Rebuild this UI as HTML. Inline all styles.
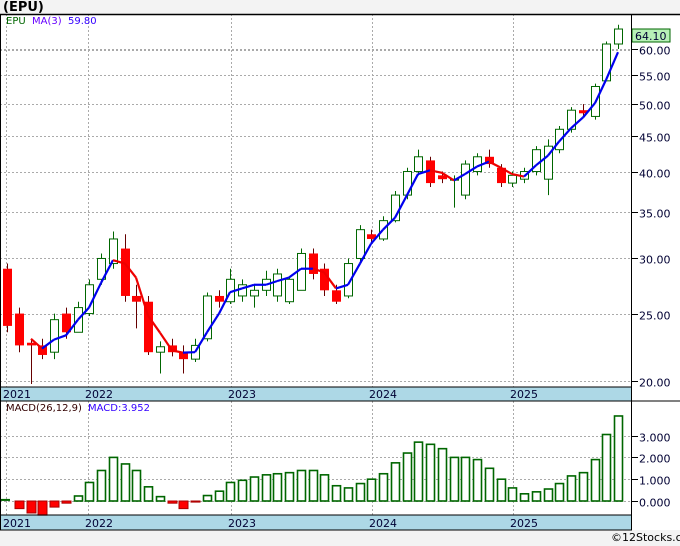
<!DOCTYPE html><html><head><meta charset="utf-8"><style>
body{margin:0;width:680px;height:546px;background:#f3f3f3;position:relative;overflow:hidden;font-family:"DejaVu Sans","Liberation Sans",sans-serif}
.t{position:absolute;font-size:11px;white-space:nowrap;color:#000033}
</style></head><body>
<div class="t" style="left:3px;top:0px;font-weight:bold;font-size:13px;color:#000">(EPU)</div>
<svg id="s" width="680" height="546" style="position:absolute;left:0;top:0"></svg>
<div class="t" style="left:6px;top:16px;font-size:10px;color:#006600">EPU</div>
<div class="t" style="left:32px;top:16px;font-size:10px;color:#6600ff">MA(3)</div>
<div class="t" style="left:68px;top:16px;font-size:10px;color:#3300ff">59.80</div>
<div class="t" style="left:6px;top:403px;font-size:10px;color:#330000">MACD(26,12,9)</div>
<div class="t" style="left:88px;top:403px;font-size:10px;color:#3300ff">MACD:3.952</div>
<div class="t" style="left:611px;top:531px;font-size:11px;color:#000">©12Stocks.com</div>
<script>
var s=document.getElementById('s'),h='';
function L(x1,y1,x2,y2,c,w,d){h+='<line x1="'+x1+'" y1="'+y1+'" x2="'+x2+'" y2="'+y2+'" stroke="'+c+'" stroke-width="'+(w||1)+'"'+(d?' stroke-dasharray="2,2"':'')+'/>';}
function R(x,y,w,hh,f,st,sw){h+='<rect x="'+x+'" y="'+y+'" width="'+w+'" height="'+hh+'" fill="'+f+'"'+(st?' stroke="'+st+'" stroke-width="'+(sw||1)+'"':'')+'/>';}
function T(x,y,t,fs){h+='<text x="'+x+'" y="'+y+'" font-size="'+(fs||11)+'" fill="#000033" font-family="DejaVu Sans,sans-serif">'+t+'</text>';}
R(0,14,680,516,'#fff');
R(0,387,632,14,'#add8e6');R(0,515,632,15,'#add8e6');
function py(p){return 381-302.2*Math.log(p/20);}
var yrs=[[6,'2021'],[88,'2022'],[231,'2023'],[372,'2024'],[513,'2025']];
yrs.forEach(function(a){L(a[0]+.5,14,a[0]+.5,387,'#aaa',1,1);L(a[0]+.5,401,a[0]+.5,515,'#aaa',1,1);T(a[0]-3,398,a[1]);T(a[0]-3,527,a[1]);});
[60,55,50,45,40,35,30,25,20].forEach(function(p){var y=Math.round(py(p))+.5;L(0,y,632,y,'#aaa',1,1);L(632,y,638,y,'#000');T(639,y+5,p.toFixed(2));});
L(0,50.5,632,50.5,'#aaa',1,1);
function my(v){return 501-21.8*v;}
[0,1,2,3].forEach(function(v){var y=Math.round(my(v))+.5;L(0,y,632,y,'#aaa',1,1);L(632,y,638,y,'#000');T(639,y+5,v.toFixed(3));});
var c=[[29,24,29.5,23.5],[25,22.5,25.5,22],[22.7,22.5,23,19.8],[22.5,21.8,23,21.5],[22,24.5,25,21.5],[25,23.5,25.5,23],[23.5,25.5,26,23.5],[25,27.5,28,24.8],[28,30,30.5,27.5],[29.5,32,32.8,29],[31,26.5,32.5,26],[26.5,26,27.5,23.8],[26,22,26.5,21.8],[22,22.4,22.8,20.5],[22.5,22,23,21.7],[22,21.5,22.5,20.5],[21.5,22.5,23,21.3],[23,26.5,26.8,22.8],[26.5,26,27,25.5],[26,28,29,25.8],[26.5,27.5,28,26],[26.5,27,27.5,25.5],[27,28,28.8,26.5],[26.5,28.5,29,26],[26,28,28.3,25.8],[27,30.5,31,27],[30.5,28.5,31,28],[29,27,29.5,26.5],[27,26,27.5,25.8],[26.5,29.5,30,26.3],[30,33,33.5,29.5],[32.5,32,33,31.5],[32,34,34.5,31.8],[34,37,37.5,33.8],[37,40,40.5,36.5],[40,42,43,39.5],[41.5,38.5,42,38],[39.5,39,40,38.5],[39,39,39.5,35.5],[37,41,41.5,36.5],[40,42,42.5,39.5],[42,41,43,40.5],[40.5,38.5,41,38],[38.5,39.5,40,38],[39,40,40.5,38.5],[40,43,43.5,39.5],[39,43.5,44.5,37],[43,46,46.5,42.5],[46,49,49.5,45.5],[49,48.5,50,48],[48,53,53.5,47.5],[54,61,61.5,54],[61,64.1,65,60]];
var m=[0.05,-0.35,-0.55,-0.65,-0.28,-0.1,0.23,0.85,1.4,2.0,1.7,1.4,0.65,0.2,-0.1,-0.35,-0.05,0.25,0.45,0.85,0.95,1.1,1.2,1.25,1.3,1.4,1.4,1.2,0.7,0.6,0.8,1.0,1.25,1.75,2.2,2.7,2.6,2.4,2.0,2.0,1.9,1.5,1.0,0.6,0.33,0.42,0.55,0.8,1.15,1.3,1.9,3.05,3.9];
function X(i){return Math.round(7+11.75*i);}
c.forEach(function(k,i){var x=X(i),up=k[1]>=k[0],col=up?'#006600':'#660000';
L(x+.5,py(k[2]),x+.5,py(k[3]),col);
var t=py(Math.max(k[0],k[1])),b=py(Math.min(k[0],k[1]));if(b-t<1)b=t+1;
if(up)R(x-3.5,t,8,b-t,'#fff',col);else{R(x-4,t,9,b-t,'#f00');}});
var ma=[];c.forEach(function(k,i){if(i>=2)ma.push([X(i),(c[i][1]+c[i-1][1]+c[i-2][1])/3]);});
for(var i=1;i<ma.length;i++){L(ma[i-1][0],py(ma[i-1][1]),ma[i][0],py(ma[i][1]),ma[i][1]>=ma[i-1][1]?'#0000ee':'#ee0000',2.2);}
m.forEach(function(v,i){var x=X(i);if(i==0){L(0,my(v),10,my(v),'#006600',2);return;}
if(v>=0)R(x-3.5,my(v),8,my(0)-my(v),'#fff','#006600',1.6);else R(x-4,my(0),9,my(v)-my(0),'#f00','#aa0000');});
R(632,29,38,13,'#b8f0b8','#006600');T(635,40,'64.10');
L(0.5,14,0.5,530,'#000');L(631.5,14,631.5,530,'#000');L(0,14.5,680,14.5,'#000',1.5);L(0,387,632,387,'#000');L(0,401,680,401,'#000');L(0,515,632,515,'#000');L(0,530,632,530,'#000');
s.innerHTML=h;
</script>
</body></html>
